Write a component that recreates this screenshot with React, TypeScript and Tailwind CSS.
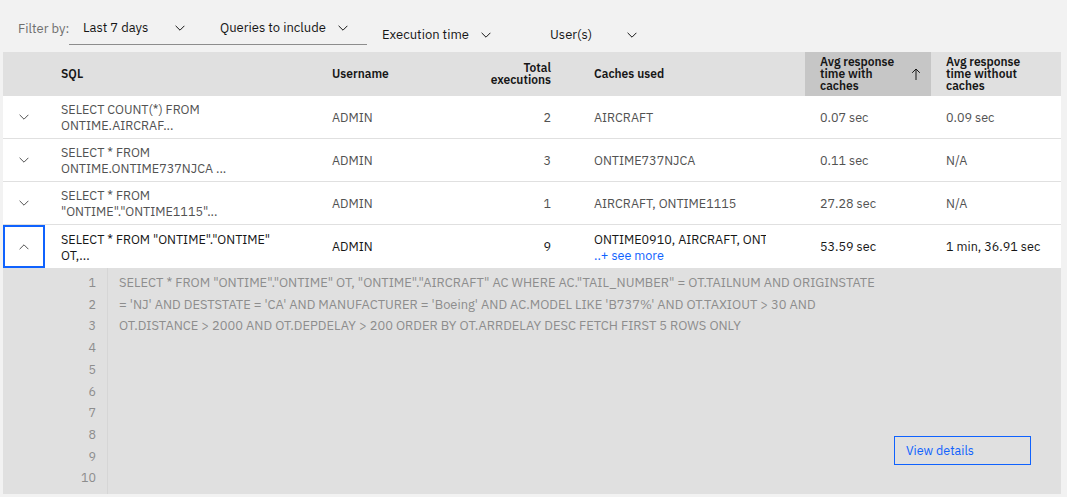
import React from "react";

const font = { fontFamily: "'IBM Plex Sans', Roboto, 'Liberation Sans', sans-serif" };

function ChevronDown({ className = "" }: { className?: string }) {
  return (
    <svg width="10" height="6" viewBox="0 0 10 6" className={`shrink-0 ${className}`} fill="none">
      <path d="M0.6 0.8 L5 5.2 L9.4 0.8" stroke="currentColor" strokeWidth="1" />
    </svg>
  );
}

function ChevronUp({ className = "" }: { className?: string }) {
  return (
    <svg width="10" height="6" viewBox="0 0 10 6" className={`shrink-0 ${className}`} fill="none">
      <path d="M0.6 5.2 L5 0.8 L9.4 5.2" stroke="currentColor" strokeWidth="1" />
    </svg>
  );
}

function ArrowUp() {
  return (
    <svg width="10" height="12" viewBox="0 0 10 12" fill="none" className="shrink-0 text-[#161616]">
      <path d="M5 1 V12 M1.2 4.8 L5 1 L8.8 4.8" stroke="currentColor" strokeWidth="1" />
    </svg>
  );
}

const rows = [
  { sql: ["SELECT COUNT(*) FROM", "ONTIME.AIRCRAF..."], user: "ADMIN", total: "2", caches: "AIRCRAFT", withC: "0.07 sec", without: "0.09 sec" },
  { sql: ["SELECT * FROM", "ONTIME.ONTIME737NJCA ..."], user: "ADMIN", total: "3", caches: "ONTIME737NJCA", withC: "0.11 sec", without: "N/A" },
  { sql: ["SELECT * FROM", "\"ONTIME\".\"ONTIME1115\"..."], user: "ADMIN", total: "1", caches: "AIRCRAFT, ONTIME1115", withC: "27.28 sec", without: "N/A" },
];

const codeLines = [
  "SELECT * FROM \"ONTIME\".\"ONTIME\" OT, \"ONTIME\".\"AIRCRAFT\" AC WHERE AC.\"TAIL_NUMBER\" = OT.TAILNUM AND ORIGINSTATE",
  "= 'NJ' AND DESTSTATE = 'CA' AND MANUFACTURER = 'Boeing' AND AC.MODEL LIKE 'B737%' AND OT.TAXIOUT > 30 AND",
  "OT.DISTANCE > 2000 AND OT.DEPDELAY > 200 ORDER BY OT.ARRDELAY DESC FETCH FIRST 5 ROWS ONLY",
];

const cols = "grid grid-cols-[42px_271px_134px_116px_239px_126px_130px]";

export default function App() {
  return (
    <div className="w-[1067px] h-[497px] bg-[#f2f2f2] overflow-hidden text-[#161616]" style={font}>
      {/* Filters */}
      <div className="flex items-start h-[52px] pl-[18px] text-[13px] whitespace-nowrap">
        <div className="text-[#6f6f6f] pt-[19px] w-[51px]">Filter by:</div>
        <div className="flex border-b border-[#8d8d8d] h-[45px]">
          <div className="flex items-center justify-between w-[136px] pl-[14px] pr-[20px] pt-[17px] pb-[5px]">
            <span>Last 7 days</span>
            <ChevronDown />
          </div>
          <div className="flex items-center justify-between w-[162px] pl-[15px] pr-[19px] pt-[17px] pb-[5px]">
            <span>Queries to include</span>
            <ChevronDown />
          </div>
        </div>
        <div className="flex items-center justify-between w-[134px] pl-[15px] pr-[10px] pt-[25px]">
          <span>Execution time</span>
          <ChevronDown />
        </div>
        <div className="flex items-center justify-between w-[146px] pl-[49px] pr-[10px] pt-[25px]">
          <span>User(s)</span>
          <ChevronDown />
        </div>
      </div>

      {/* Table */}
      <div className="ml-[3px] w-[1058px]">
        <div className={`${cols} h-[44px] bg-[#e0e0e0] text-[12px] font-semibold leading-[12.3px] text-[#161616]`}>
          <div />
          <div className="flex items-center pl-[16px]">SQL</div>
          <div className="flex items-center pl-[16px]">Username</div>
          <div className="flex items-center justify-end text-right pr-[15px]">
            Total
            <br />
            executions
          </div>
          <div className="flex items-center pl-[28px]">Caches used</div>
          <div className="flex items-center justify-between bg-[#c6c6c6] pl-[15px] pr-[10px]">
            <span>
              Avg response
              <br />
              time with
              <br />
              caches
            </span>
            <ArrowUp />
          </div>
          <div className="flex items-center pl-[15px]">
            <span>
              Avg response
              <br />
              time without
              <br />
              caches
            </span>
          </div>
        </div>

        {rows.map((r, i) => (
          <div key={i} className={`${cols} h-[43px] bg-white border-b border-[#e0e0e0] text-[12.6px] text-[#525252]`}>
            <div className="flex items-center justify-center">
              <ChevronDown className="text-[#525252]" />
            </div>
            <div className="flex flex-col justify-center pl-[16px] leading-[16px]">
              <span>{r.sql[0]}</span>
              <span>{r.sql[1]}</span>
            </div>
            <div className="flex items-center pl-[16px]">{r.user}</div>
            <div className="flex items-center justify-end pr-[15px]">{r.total}</div>
            <div className="flex items-center pl-[28px]">{r.caches}</div>
            <div className="flex items-center pl-[15px]">{r.withC}</div>
            <div className="flex items-center pl-[15px]">{r.without}</div>
          </div>
        ))}

        {/* Expanded row */}
        <div className={`${cols} h-[43px] bg-white text-[12.6px] text-[#161616]`}>
          <div className="flex items-center justify-center border-2 border-[#0f62fe]">
            <ChevronUp className="text-[#525252]" />
          </div>
          <div className="flex flex-col justify-center pl-[16px] leading-[16px]">
            <span>SELECT * FROM "ONTIME"."ONTIME"</span>
            <span>OT,...</span>
          </div>
          <div className="flex items-center pl-[16px]">ADMIN</div>
          <div className="flex items-center justify-end pr-[15px]">9</div>
          <div className="flex flex-col justify-center pl-[28px] leading-[16px]">
            <span className="w-[172px] overflow-hidden whitespace-nowrap">ONTIME0910, AIRCRAFT, ONTIME1115</span>
            <span className="text-[#0f62fe]">..+ see more</span>
          </div>
          <div className="flex items-center pl-[15px]">53.59 sec</div>
          <div className="flex items-center pl-[15px]">1 min, 36.91 sec</div>
        </div>

        <div className="flex h-[226px] bg-[#e0e0e0] text-[#8d8d8d]">
          <div className="w-[105px] border-r border-[#d6d6d6] pr-[11px] pt-[4px] pb-[6px] text-right text-[12.5px] leading-[21.7px]">
            {Array.from({ length: 10 }, (_, n) => (
              <div key={n}>{n + 1}</div>
            ))}
          </div>
          <div className="flex-1 pl-[11px] pt-[4px] text-[12.9px] leading-[21.7px]">
            {codeLines.map((l, n) => (
              <div key={n} className="whitespace-nowrap">
                {l}
              </div>
            ))}
            <div className="flex justify-end pr-[30px] mt-[99px]">
              <button className="w-[137px] h-[29px] border border-[#0f62fe] text-left pl-[11px] text-[12.5px] text-[#0f62fe]">
                View details
              </button>
            </div>
          </div>
        </div>
      </div>
    </div>
  );
}
